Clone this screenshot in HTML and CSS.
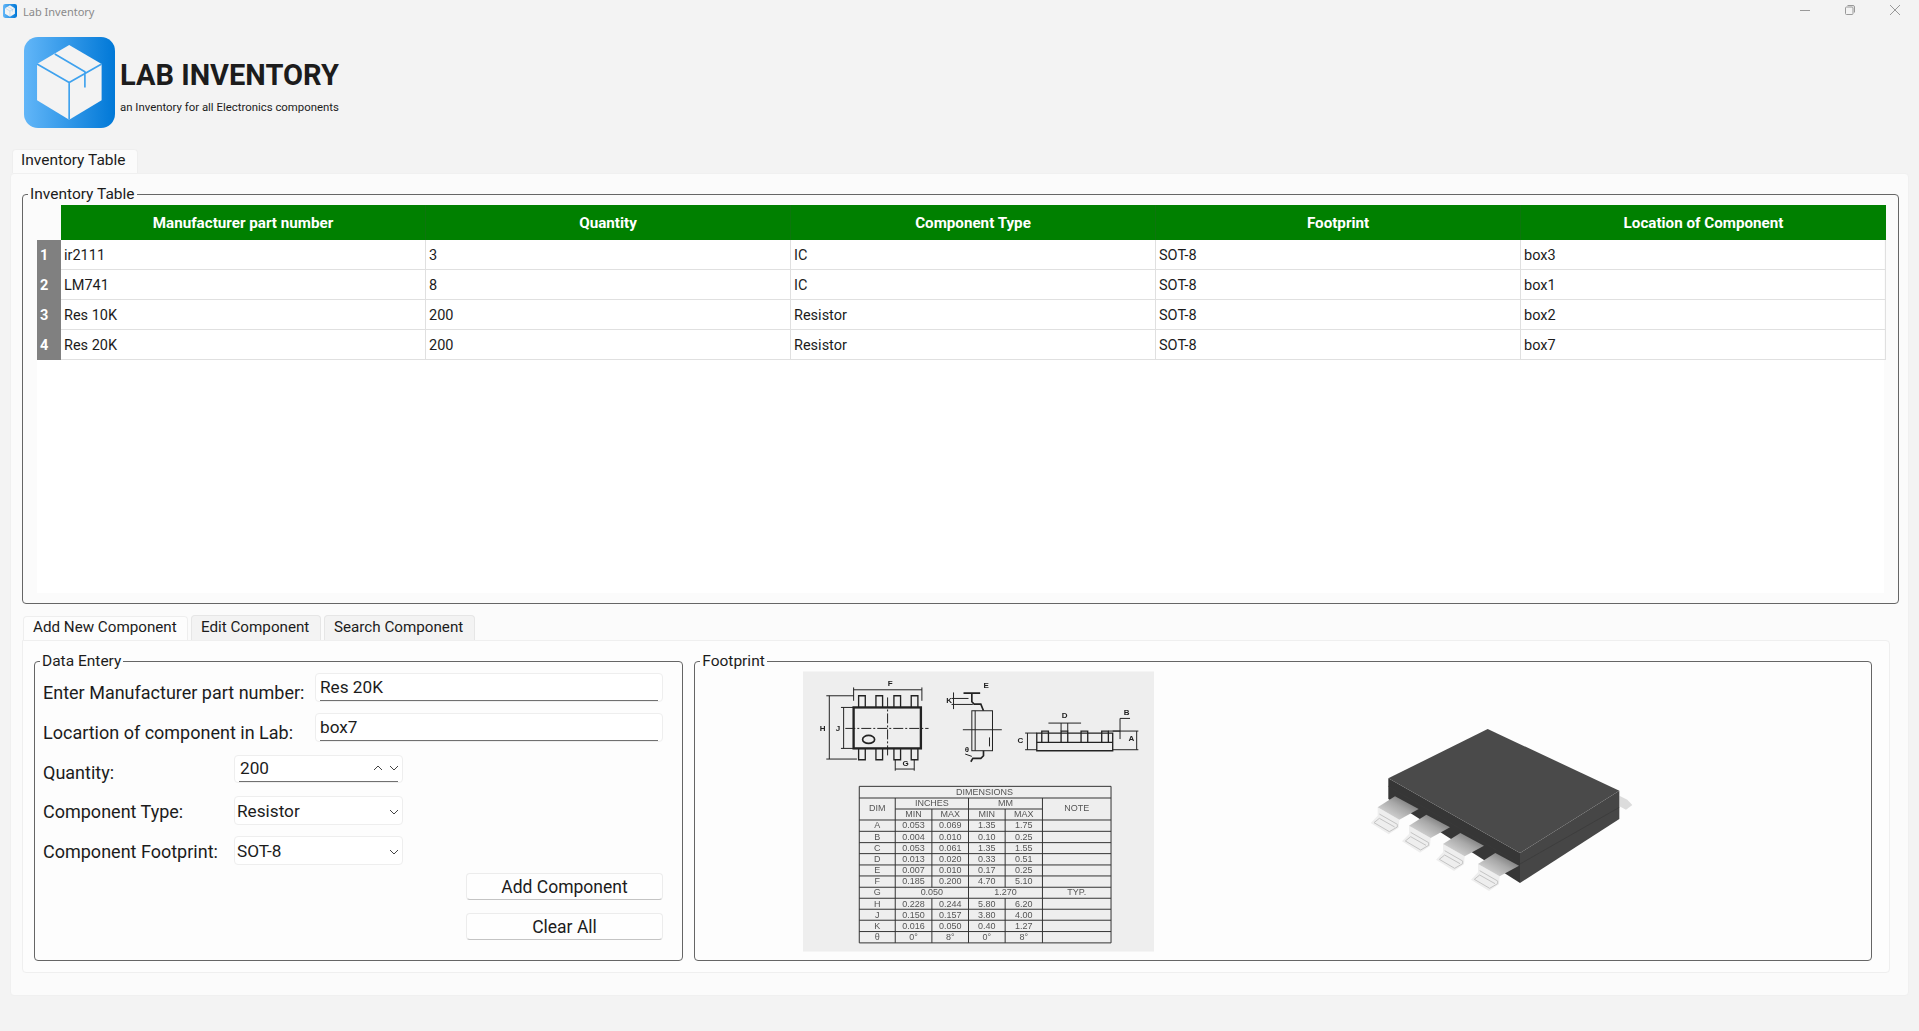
FILE: index.html
```html
<!DOCTYPE html>
<html lang="en">
<head>
    <meta charset="UTF-8">
    <title>Lab Inventory</title>
    <link rel="stylesheet" href="styles.css">
</head>
<body>
    <svg class="defs" width="0" height="0">
        <defs>
            <linearGradient id="logoFill" x1="0" y1="0" x2="1" y2="0">
                <stop offset="0" stop-color="#62b6f8"/>
                <stop offset="1" stop-color="#0078d7"/>
            </linearGradient>
            <linearGradient id="pinFill" x1="1" y1="0" x2="0" y2="1">
                <stop offset="0" stop-color="#555555"/>
                <stop offset="0.45" stop-color="#a8a8a8"/>
                <stop offset="1" stop-color="#ececec"/>
            </linearGradient>
            <symbol id="cube" viewBox="73 111 272 272">
                <rect x="73" y="111" width="272" height="272" rx="42" fill="url(#logoFill)"/>
                <path d="M208 135 L305 192 V300 L208 358 L112 300 V192 Z" fill="#f3f3f3"/>
                <path d="M112 192 L208 247 L305 192 M208 247 V358 M165 162 L255 215 V262" fill="none" stroke="#3fa2ee" stroke-width="5"/>
            </symbol>
            <g id="pin">
                <path d="M113 325 V350 L92 372 L146 406 L176 386 L178 362 Z" fill="#eeeeee"/>
                <path d="M118 345 L172 376 V384 L148 398 L102 371 L118 358 L164 384" fill="none" stroke="#c4c4c4" stroke-width="3"/>
                <path d="M113 325 L165 292 L236 330 L178 362 Z" fill="url(#pinFill)"/>
            </g>
        </defs>
    </svg>

    <div class="titlebar">
        <div class="title-left">
            <svg class="app-icon"><use href="#cube"/></svg>
            <span>Lab Inventory</span>
        </div>
        <div class="win-controls">
            <svg width="10" height="10" viewBox="0 0 10 10"><path d="M0 5.5H10"/></svg>
            <svg width="10" height="10" viewBox="0 0 10 10"><rect x="0.5" y="2" width="7.5" height="7.5" rx="1"/><path d="M2.5 .5H8a1.5 1.5 0 0 1 1.5 1.5V7.5"/></svg>
            <svg width="10" height="10" viewBox="0 0 10 10"><path d="M0 0L10 10M10 0L0 10"/></svg>
        </div>
    </div>

    <div class="brand">
        <svg class="logo"><use href="#cube"/></svg>
        <div>
            <div class="brand-name">LAB INVENTORY</div>
            <div class="brand-sub">an Inventory for all Electronics components</div>
        </div>
    </div>

    <div class="top-tabs">
        <div class="tab tab-main">Inventory Table</div>
    </div>

    <div class="pane">
        <div class="group table-group">
            <div class="group-title">Inventory Table</div>
            <div class="table-view">
                <table>
                    <tr>
                        <th class="corner"></th>
                        <th>Manufacturer part number</th>
                        <th>Quantity</th>
                        <th>Component Type</th>
                        <th>Footprint</th>
                        <th>Location of Component</th>
                    </tr>
                    <tr>
                        <td class="row-num">1</td>
                        <td>ir2111</td>
                        <td>3</td>
                        <td>IC</td>
                        <td>SOT-8</td>
                        <td>box3</td>
                    </tr>
                    <tr>
                        <td class="row-num">2</td>
                        <td>LM741</td>
                        <td>8</td>
                        <td>IC</td>
                        <td>SOT-8</td>
                        <td>box1</td>
                    </tr>
                    <tr>
                        <td class="row-num">3</td>
                        <td>Res 10K</td>
                        <td>200</td>
                        <td>Resistor</td>
                        <td>SOT-8</td>
                        <td>box2</td>
                    </tr>
                    <tr>
                        <td class="row-num">4</td>
                        <td>Res 20K</td>
                        <td>200</td>
                        <td>Resistor</td>
                        <td>SOT-8</td>
                        <td>box7</td>
                    </tr>
                </table>
            </div>
        </div>

        <div class="lower-tabs">
            <div class="tab tab-active">Add New Component</div>
            <div class="tab tab-edit">Edit Component</div>
            <div class="tab tab-search">Search Component</div>
        </div>

        <div class="inner-pane">
            <div class="group data-group">
                <div class="group-title">Data Entery</div>
                <div class="form">
                    <div class="label label-wide label-a">Enter Manufacturer part number:</div>
                    <div class="field line-edit">Res 20K</div>

                    <div class="label label-wide label-a">Locartion of component in Lab:</div>
                    <div class="field line-edit">box7</div>

                    <div class="label label-b">Quantity:</div>
                    <div class="field spin">
                        <span>200</span>
                        <svg class="chev chev-up" width="10" height="6" viewBox="0 0 10 6"><path d="M1 5L5 1L9 5"/></svg>
                        <svg class="chev" width="10" height="6" viewBox="0 0 10 6"><path d="M1 1L5 5L9 1"/></svg>
                    </div>

                    <div class="label label-c">Component Type:</div>
                    <div class="field combo">
                        <span>Resistor</span>
                        <svg class="chev" width="10" height="6" viewBox="0 0 10 6"><path d="M1 1L5 5L9 1"/></svg>
                    </div>

                    <div class="label label-c">Component Footprint:</div>
                    <div class="field combo">
                        <span>SOT-8</span>
                        <svg class="chev" width="10" height="6" viewBox="0 0 10 6"><path d="M1 1L5 5L9 1"/></svg>
                    </div>

                    <div class="btn btn-add">Add Component</div>
                    <div class="btn btn-clear">Clear All</div>
                </div>
            </div>

            <div class="group footprint-group">
                <div class="group-title">Footprint</div>

                <svg class="drawing" viewBox="38 37 1054 841">
                    <rect x="38" y="37" width="1054" height="841" fill="#eeeeee"/>
                    <!-- top view -->
                    <g fill="none" stroke="#222" stroke-width="3">
                        <rect x="190" y="145" width="202" height="123" stroke-width="7"/>
                        <path stroke-width="4" d="M205 145V110H225V145M257 145V110H277V145M311 145V110H331V145M363 145V110H383V145"/>
                        <path stroke-width="4" d="M205 268V302H225V268M257 268V302H277V268M311 268V302H331V268M363 268V302H383V268"/>
                        <path d="M165 208H415M292 115V295" stroke-dasharray="30 6 6 6"/>
                        <ellipse cx="235" cy="241" rx="18" ry="12" stroke-width="5"/>
                        <path d="M190 92H395M190 85V125M395 85V125"/>
                        <path d="M117 110V300M108 110H190M108 300H200"/>
                        <path d="M160 145V268M152 145H190M152 268H190"/>
                        <path d="M315 330H372M315 300V335M372 300V335"/>
                    </g>
                    <!-- side view -->
                    <g fill="none" stroke="#222" stroke-width="3">
                        <rect x="545" y="155" width="62" height="120"/>
                        <path d="M555 155V275M598 235V262"/>
                        <path d="M520 102H570M545 102V128L552 135H572L580 155" stroke-width="5"/>
                        <path d="M580 275V290L572 298H548L542 308" stroke-width="5"/>
                        <path d="M490 100V150M484 118H535M484 136H548"/>
                        <path d="M518 212H635M525 285L545 292"/>
                    </g>
                    <!-- end view -->
                    <g fill="none" stroke="#222" stroke-width="3">
                        <path d="M740 275V222H968V275Z" stroke-width="4"/>
                        <path d="M740 250H968" stroke-width="4"/>
                        <path stroke-width="4" d="M755 250V216H775V250M813 250V216H833V250M873 250V216H893V250M935 250V216H955V250"/>
                        <path d="M775 192H873M813 192V216M833 192V216"/>
                        <path d="M990 178V240M990 178H1020M955 216H990"/>
                        <path d="M712 222V272M705 222H740M705 272H740"/>
                        <path d="M1040 216V272M968 216H1045M968 272H1045"/>
                    </g>
                    <g class="drawing-labels" font-weight="700" font-size="24">
                        <text x="300" y="82">F</text>
                        <text x="97" y="215">H</text>
                        <text x="143" y="215">J</text>
                        <text x="346" y="320">G</text>
                        <text x="588" y="88">E</text>
                        <text x="477" y="133">K</text>
                        <text x="530" y="280">&#952;</text>
                        <text x="824" y="176">D</text>
                        <text x="1010" y="168">B</text>
                        <text x="691" y="252">C</text>
                        <text x="1024" y="246">A</text>
                    </g>
                    <!-- dimensions table -->
                    <path fill="none" stroke="#333" stroke-width="3" d="M207 382H963V852H207Z
                        M207 417H963M315 450H757M207 483H963M207 517H963M207 551H963M207 584H963M207 618H963
                        M207 651H963M207 685H963M207 718H963M207 751H963M207 784H963M207 818H963
                        M315 417V852M535 417V852M757 417V852M425 450V685M425 718V852M645 450V685M645 718V852"/>
                    <g class="drawing-table" font-size="27">
                        <text x="583" y="407">DIMENSIONS</text>
                        <text x="425" y="441">INCHES</text>
                        <text x="646" y="441">MM</text>
                        <text x="261" y="457">DIM</text>
                        <text x="860" y="457">NOTE</text>
                        <text x="370" y="475">MIN</text><text x="480" y="475">MAX</text><text x="590" y="475">MIN</text><text x="701" y="475">MAX</text>
                        <text x="261" y="508">A</text><text x="370" y="508">0.053</text><text x="480" y="508">0.069</text><text x="590" y="508">1.35</text><text x="701" y="508">1.75</text>
                        <text x="261" y="542">B</text><text x="370" y="542">0.004</text><text x="480" y="542">0.010</text><text x="590" y="542">0.10</text><text x="701" y="542">0.25</text>
                        <text x="261" y="575">C</text><text x="370" y="575">0.053</text><text x="480" y="575">0.061</text><text x="590" y="575">1.35</text><text x="701" y="575">1.55</text>
                        <text x="261" y="609">D</text><text x="370" y="609">0.013</text><text x="480" y="609">0.020</text><text x="590" y="609">0.33</text><text x="701" y="609">0.51</text>
                        <text x="261" y="642">E</text><text x="370" y="642">0.007</text><text x="480" y="642">0.010</text><text x="590" y="642">0.17</text><text x="701" y="642">0.25</text>
                        <text x="261" y="676">F</text><text x="370" y="676">0.185</text><text x="480" y="676">0.200</text><text x="590" y="676">4.70</text><text x="701" y="676">5.10</text>
                        <text x="261" y="709">G</text><text x="425" y="709">0.050</text><text x="646" y="709">1.270</text><text x="860" y="709">TYP.</text>
                        <text x="261" y="743">H</text><text x="370" y="743">0.228</text><text x="480" y="743">0.244</text><text x="590" y="743">5.80</text><text x="701" y="743">6.20</text>
                        <text x="261" y="776">J</text><text x="370" y="776">0.150</text><text x="480" y="776">0.157</text><text x="590" y="776">3.80</text><text x="701" y="776">4.00</text>
                        <text x="261" y="809">K</text><text x="370" y="809">0.016</text><text x="480" y="809">0.050</text><text x="590" y="809">0.40</text><text x="701" y="809">1.27</text>
                        <text x="261" y="843">&#952;</text><text x="370" y="843">0&#176;</text><text x="480" y="843">8&#176;</text><text x="590" y="843">0&#176;</text><text x="701" y="843">8&#176;</text>
                    </g>
                </svg>

                <svg class="chip" viewBox="0 0 960 660">
                    <path d="M838 290 L862 302 L877 318 L858 332 L838 322 Z" fill="#dcdcdc"/>
                    <path d="M145 238 L540 462 L540 552 L145 300 Z" fill="#363636"/>
                    <path d="M540 462 L838 275 L838 360 L540 552 Z" fill="#464646"/>
                    <path d="M145 262 L540 495 L838 325" fill="none" stroke="#3a3a3a" stroke-width="2"/>
                    <path d="M443 90 L838 275 L540 462 L145 238 Z" fill="#4a4a4a"/>
                    <use href="#pin"/>
                    <use href="#pin" x="94" y="55"/>
                    <use href="#pin" x="196" y="110"/>
                    <use href="#pin" x="301" y="170"/>
                </svg>
            </div>
        </div>
    </div>
</body>
</html>
```

FILE: styles.css
```css
* {
    box-sizing: border-box;
}
body {
    margin: 0;
    height: 1031px;
    overflow: hidden;
    background-color: #f3f3f3;
    color: #1c1c1c;
    font-family: Roboto, "Noto Sans", sans-serif;
}
.defs {
    display: block;
    height: 0;
}

.titlebar {
    display: flex;
    justify-content: space-between;
    height: 24px;
    padding: 3px 19px 0 3px;
}
.title-left {
    display: flex;
    gap: 6px;
    font-family: "Noto Sans", sans-serif;
    font-size: 11px;
    line-height: 18px;
    color: #8a8a8a;
}
.app-icon {
    width: 14px;
    height: 14px;
    margin-top: 1px;
}
.win-controls {
    display: flex;
    gap: 35px;
    padding-top: 2px;
}
.win-controls path,
.win-controls rect {
    fill: none;
    stroke: #999;
    stroke-width: 1;
}

.brand {
    display: flex;
    align-items: center;
    gap: 5px;
    height: 91px;
    margin: 13px 0 0 24px;
}
.logo {
    width: 91px;
    height: 91px;
}
.brand-name {
    font-size: 29px;
    font-weight: 700;
    line-height: 36px;
    margin-top: 5px;
}
.brand-sub {
    font-size: 11.4px;
    line-height: 14px;
    margin-top: 7px;
}

.top-tabs {
    display: flex;
    margin: 21px 0 0 12px;
}
.tab {
    font-size: 15.2px;
    line-height: 22px;
    background-color: #fbfbfb;
    border: 1px solid #eeeeee;
    border-bottom: none;
    border-radius: 4px 4px 0 0;
}
.tab-main {
    width: 126px;
    height: 24px;
    padding-left: 8px;
    font-size: 15.5px;
    line-height: 20px;
}

.pane {
    height: 823px;
    margin: 0 10px;
    padding: 20px 9px 0 11px;
    background-color: #fbfbfb;
    border: 1px solid #f0f0f0;
    border-radius: 4px;
}
.group {
    position: relative;
    border: 1px solid #666666;
    border-radius: 4px;
}
.group-title {
    position: absolute;
    top: -11px;
    left: 5px;
    padding: 0 2px;
    font-size: 15.5px;
    line-height: 20px;
    background-color: #fbfbfb;
}

.table-group {
    height: 410px;
    padding: 10px 14px;
}
.table-view {
    height: 388px;
    background-color: #ffffff;
}
table {
    width: 1849px;
    table-layout: fixed;
    border-collapse: separate;
    border-spacing: 0;
    font-size: 14.5px;
}
th {
    width: 365px;
    height: 35px;
    padding: 0;
    color: white;
    font-size: 15.2px;
    font-weight: 700;
    background-color: #008000;
    border-right: 1px solid #0d760d;
}
th:last-child {
    border-right: none;
}
th.corner {
    width: 24px;
    background-color: #fbfbfb;
    border-right: none;
}
td {
    height: 30px;
    padding: 1px 3px 0;
    border-right: 1px solid #e0e0e0;
    border-bottom: 1px solid #e0e0e0;
}
td.row-num {
    padding: 1px 0 0 3px;
    color: white;
    font-weight: 700;
    background-color: #808080;
    border: none;
}

.lower-tabs {
    display: flex;
    align-items: flex-end;
    gap: 3px;
    height: 25px;
    margin: 11px 0 0 1px;
}
.tab-active {
    width: 165px;
    height: 24px;
    padding-left: 9px;
    line-height: 20px;
    background-color: #fdfdfd;
}
.tab-edit,
.tab-search {
    height: 25px;
    padding: 0 0 0 9px;
    background-color: #f3f3f3;
    border-color: #e6e6e6;
}
.tab-edit {
    width: 130px;
}
.tab-search {
    width: 151px;
}

.inner-pane {
    display: flex;
    gap: 11px;
    height: 333px;
    margin-right: 9px;
    padding: 20px 17px 0 11px;
    background-color: #fdfdfd;
    border: 1px solid #efefef;
    border-radius: 0 4px 4px 4px;
}
.inner-pane .group {
    height: 300px;
}
.inner-pane .group-title {
    background-color: #fdfdfd;
}
.data-group {
    width: 650px;
    padding: 11px 0 0 8px;
}
.footprint-group {
    display: flex;
    align-items: flex-start;
    width: 1179px;
    padding: 9px 0 0 108px;
}

.form {
    display: grid;
    grid-template-columns: 191px 81px 88px 63px 197px;
    grid-template-rows: 40px 42px 41px 40px 37px 40px 27px;
    font-size: 18px;
}
.label {
    grid-column: 1;
    line-height: 20px;
}
.label-wide {
    grid-column: 1 / 3;
}
.label-a {
    padding-top: 10px;
}
.label-b {
    padding-top: 8px;
}
.label-c {
    padding-top: 6px;
}
.field {
    display: flex;
    align-items: center;
    height: 29px;
    font-size: 17.2px;
    line-height: 26px;
    background-color: #ffffff;
    border: 1px solid #eeeeee;
    border-radius: 4px;
}
.line-edit {
    grid-column: 3 / 6;
    padding: 0 0 2px 4px;
    background-image: linear-gradient(#707070, #707070);
    background-repeat: no-repeat;
    background-position: center bottom;
    background-size: calc(100% - 8px) 1px;
}
.spin {
    grid-column: 2 / 4;
    height: 28px;
    padding: 0 3px 2px 5px;
    background-image: linear-gradient(#707070, #707070);
    background-repeat: no-repeat;
    background-position: center bottom;
    background-size: calc(100% - 8px) 1px;
}
.spin span,
.combo span {
    flex: 1;
}
.combo {
    grid-column: 2 / 4;
    padding: 0 3px 0 2px;
}
.chev {
    fill: none;
    stroke: #444444;
    stroke-width: 1;
}
.combo .chev {
    margin: 3px 0 0 0;
}
.chev-up {
    margin-right: 6px;
}
.btn {
    grid-column: 5;
    height: 27px;
    font-size: 17.5px;
    line-height: 26px;
    text-align: center;
    background-color: #fefefe;
    border: 1px solid #ececec;
    border-bottom-color: #c4c4c4;
    border-radius: 4px;
}
.btn-add {
    grid-row: 6;
}
.btn-clear {
    grid-row: 7;
}

.drawing {
    flex: none;
    width: 351px;
    height: 281px;
    filter: blur(0.5px);
}
.drawing-labels,
.drawing-table {
    font-family: "Liberation Sans", sans-serif;
    text-anchor: middle;
}
.drawing-labels {
    fill: #222222;
}
.drawing-table {
    fill: #555555;
}
.chip {
    flex: none;
    width: 320px;
    height: 220px;
    margin: 28px 0 0 186px;
    filter: blur(0.4px);
}
```
